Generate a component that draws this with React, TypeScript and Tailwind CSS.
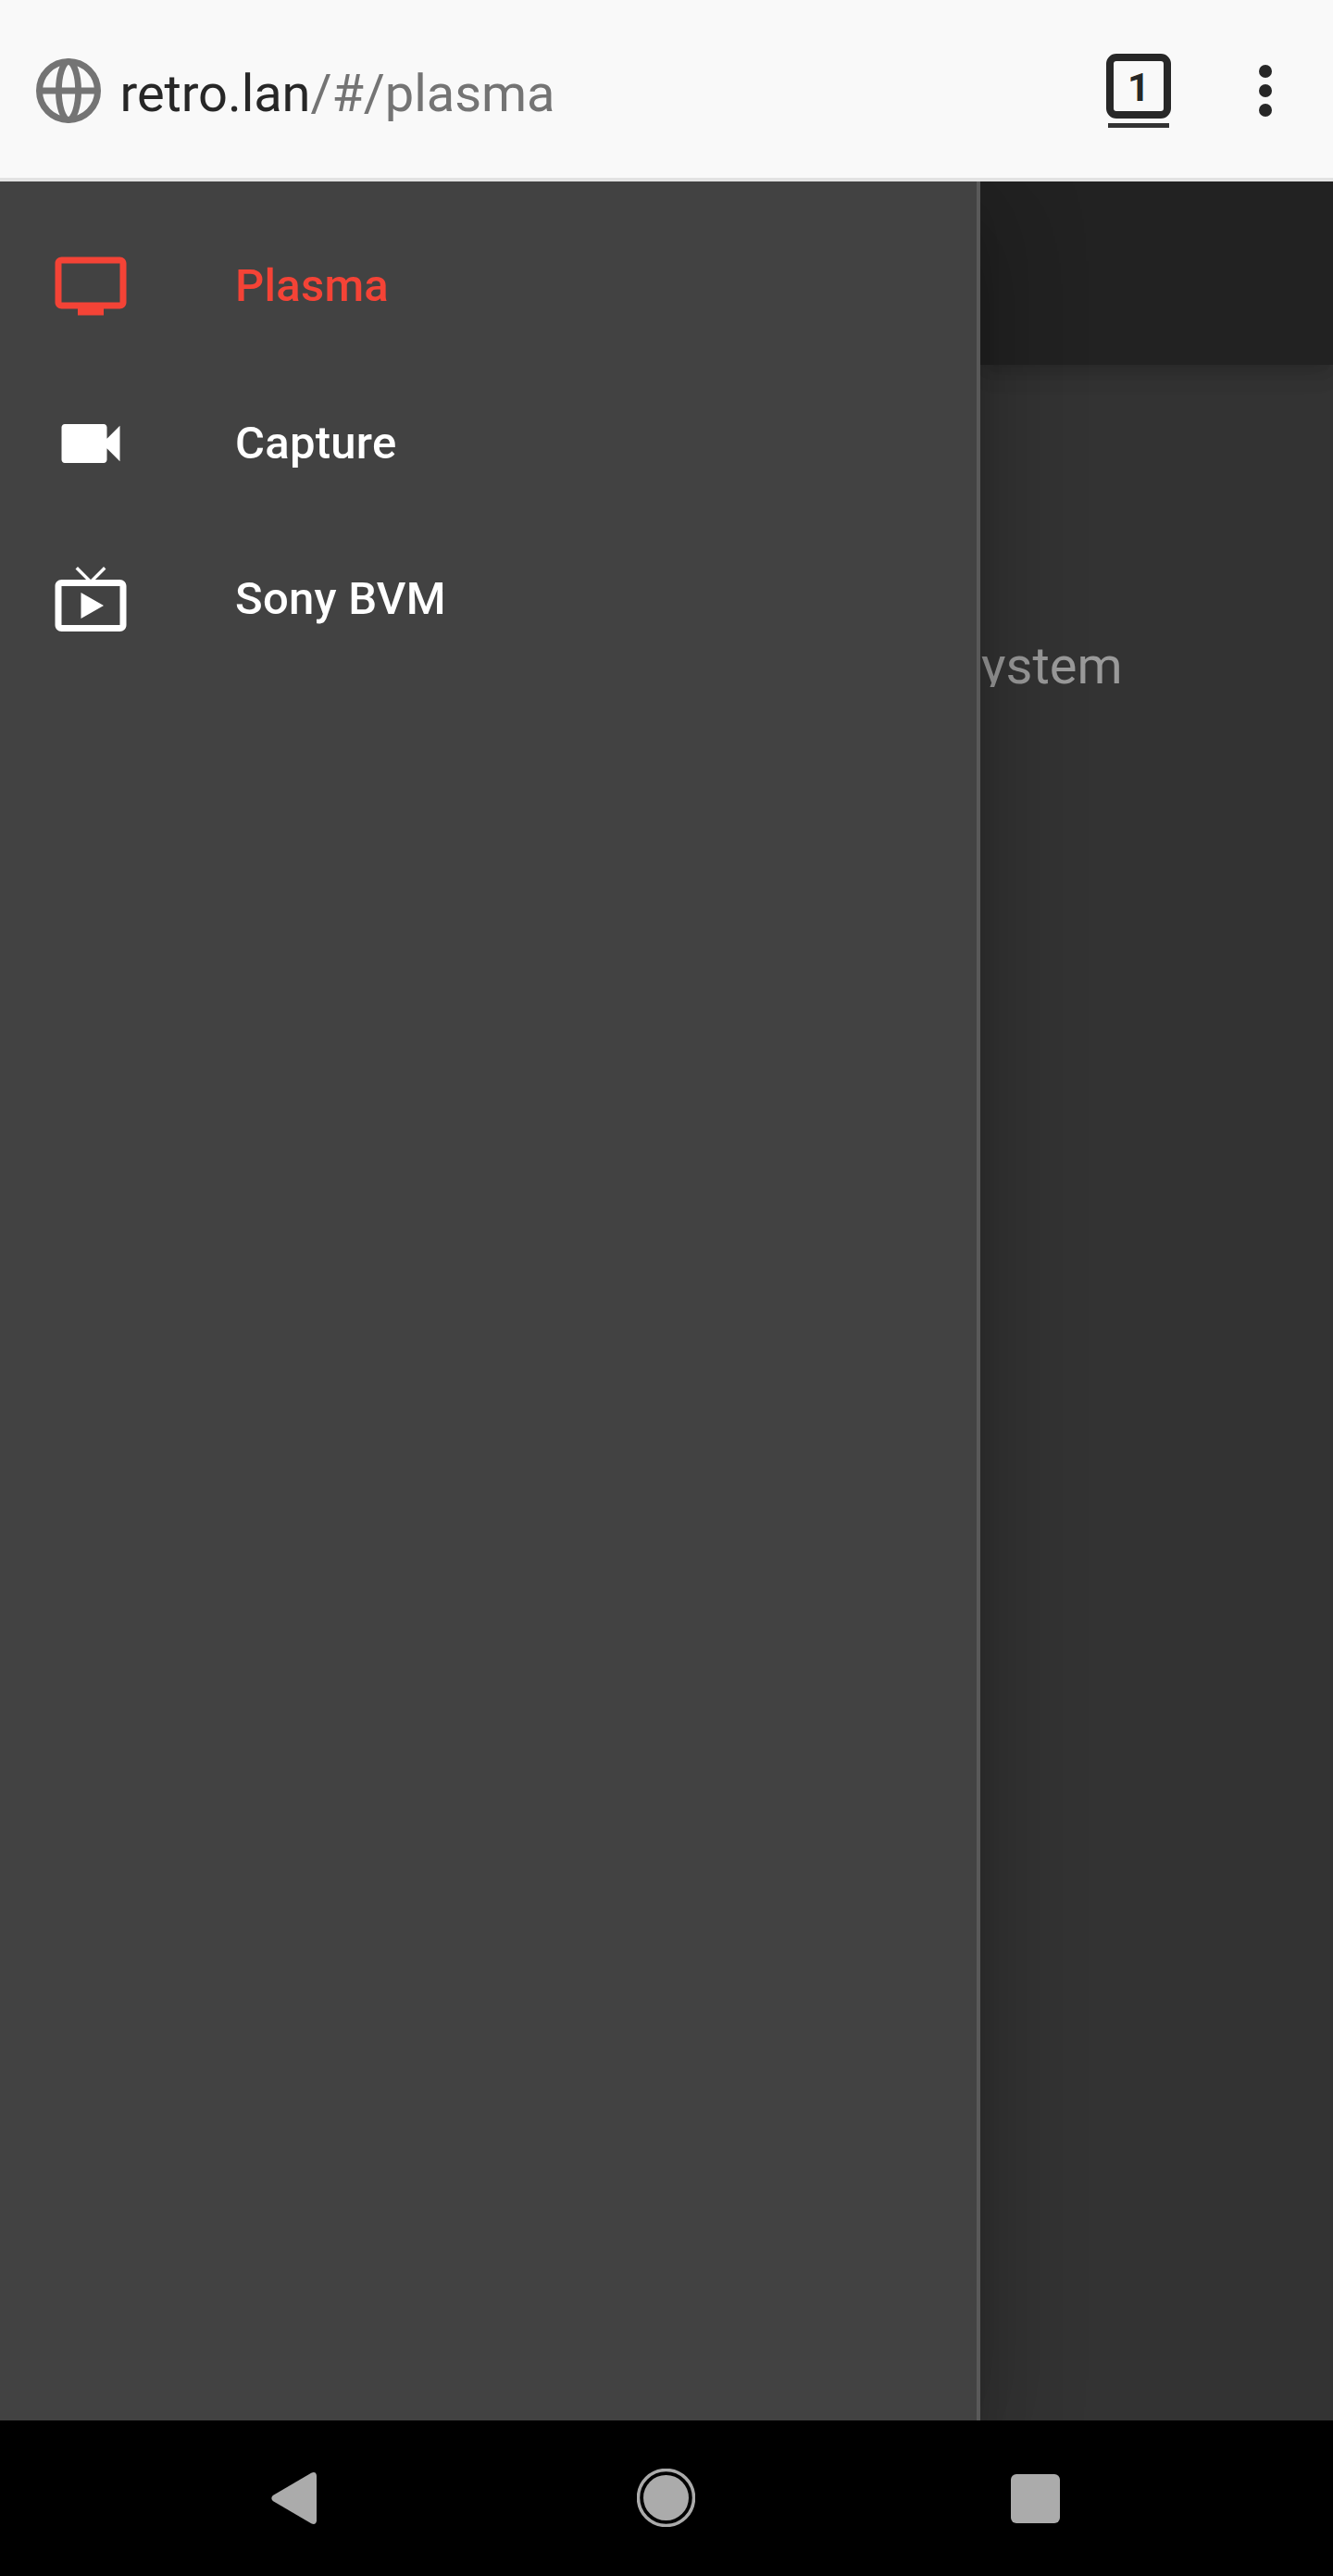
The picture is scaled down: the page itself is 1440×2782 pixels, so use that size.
import React from "react";

function GlobeIcon() {
  return (
    <svg className="block size-[70px] shrink-0" viewBox="0 0 70 70" fill="none" stroke="#747474">
      <circle cx="35" cy="35" r="31.5" strokeWidth="7" />
      <ellipse cx="35" cy="35" rx="10.6" ry="31.3" strokeWidth="6.8" />
      <path d="M3 35h64" strokeWidth="7" />
    </svg>
  );
}

const icons = {
  tv: "M21 3H3c-1.1 0-2 .9-2 2v12c0 1.1.9 2 2 2h5v2h8v-2h5c1.1 0 2-.9 2-2V5c0-1.1-.9-2-2-2zm0 14H3V5h18v12z",
  videocam:
    "M17 10.5V7c0-.55-.45-1-1-1H4c-.55 0-1 .45-1 1v10c0 .55.45 1 1 1h12c.55 0 1-.45 1-1v-3.5l4 4v-11l-4 4z",
  liveTv:
    "M21 6h-7.59l3.29-3.29L16 2l-4 4-4-4-.71.71L10.59 6H3c-1.1 0-2 .89-2 2v12c0 1.1.9 2 2 2h18c1.1 0 2-.9 2-2V8c0-1.11-.9-2-2-2zm0 14H3V8h18v12zM9 10v8l7-4z",
};

function NavItem({ path, label, className }: { path: string; label: string; className: string }) {
  return (
    <li className={`flex items-center pl-14 ${className}`}>
      <svg className="block size-[84px] shrink-0" viewBox="0 0 24 24" fill="currentColor">
        <path d={path} />
      </svg>
      <span className="ml-[114px] text-[49px] leading-[56px] font-medium tracking-[0.25px]">{label}</span>
    </li>
  );
}

export default function App() {
  return (
    <div className="flex h-[2782px] w-[1440px] flex-col overflow-hidden bg-black font-[Roboto,sans-serif]">
      <header className="relative z-20 flex h-[196px] shrink-0 items-center border-b-4 border-[#e2e2e2] bg-[#f9f9f9] pt-1 pl-[39px] text-[#272727]">
        <GlobeIcon />
        <div className="ml-[20.5px] grow pt-[6px] text-[56px] leading-[66px] tracking-[-0.08px] whitespace-nowrap">
          retro.lan<span className="text-[#747474]">/#/plasma</span>
        </div>
        <div className="mr-[95px] flex w-[70px] flex-col items-center">
          <div className="flex size-[70px] items-center justify-center rounded-[11px] border-8 border-[#272727] pt-[3px] text-[42px] leading-none font-bold">
            1
          </div>
          <div className="mt-[5px] h-[5px] w-[66px] bg-[#333]" />
        </div>
        <div className="mr-[66px] flex flex-col gap-[7px]">
          <i className="size-[14px] rounded-full bg-[#272727]" />
          <i className="size-[14px] rounded-full bg-[#272727]" />
          <i className="size-[14px] rounded-full bg-[#272727]" />
        </div>
      </header>

      <main className="flex h-[2418px] shrink-0 overflow-hidden">
        <nav className="z-10 w-[1059px] shrink-0 border-r-4 border-[#595959] bg-[#424242] pt-7 shadow-[0_28px_35px_-17px_rgba(0,0,0,0.2),0_56px_84px_7px_rgba(0,0,0,0.14),0_21px_105px_17px_rgba(0,0,0,0.12)]">
          <ul className="text-white">
            <NavItem path={icons.tv} label="Plasma" className="h-[169px] text-[#f44336]" />
            <NavItem path={icons.videocam} label="Capture" className="h-[171px]" />
            <NavItem path={icons.liveTv} label="Sony BVM" className="h-[166px]" />
          </ul>
        </nav>
        <section className="flex grow flex-col bg-[#333]">
          <div className="h-[198px] shrink-0 bg-[#222] shadow-[0_7px_14px_-3px_rgba(0,0,0,0.08),0_14px_18px_0_rgba(0,0,0,0.07),0_4px_35px_0_rgba(0,0,0,0.07)]" />
          <p className="mt-[292px] h-[56px] overflow-hidden pl-px text-[56px] leading-[66px] text-[#9a9a9a]">
            ystem
          </p>
        </section>
      </main>

      <footer className="flex grow items-center pl-[293px]">
        <svg className="block h-14 w-[49px]" viewBox="0 0 49 56" fill="#ababab">
          <path d="M43.2.7 1.8 25.1Q-1.2 28 1.8 30.9L43.2 55.3Q48.2 57.5 49 52.5V3.5Q48.2-1.500 43.2.7Z" />
        </svg>
        <svg className="ml-[346px] -mt-[1px] block size-[63px]" viewBox="0 0 63 63">
          <circle cx="31.500" cy="31.500" r="30" fill="none" stroke="#ababab" strokeWidth="3.500" />
          <circle cx="31.500" cy="31.500" r="24.500" fill="#ababab" />
        </svg>
        <div className="ml-[340.5px] size-[53px] rounded-md bg-[#ababab]" />
      </footer>
    </div>
  );
}
